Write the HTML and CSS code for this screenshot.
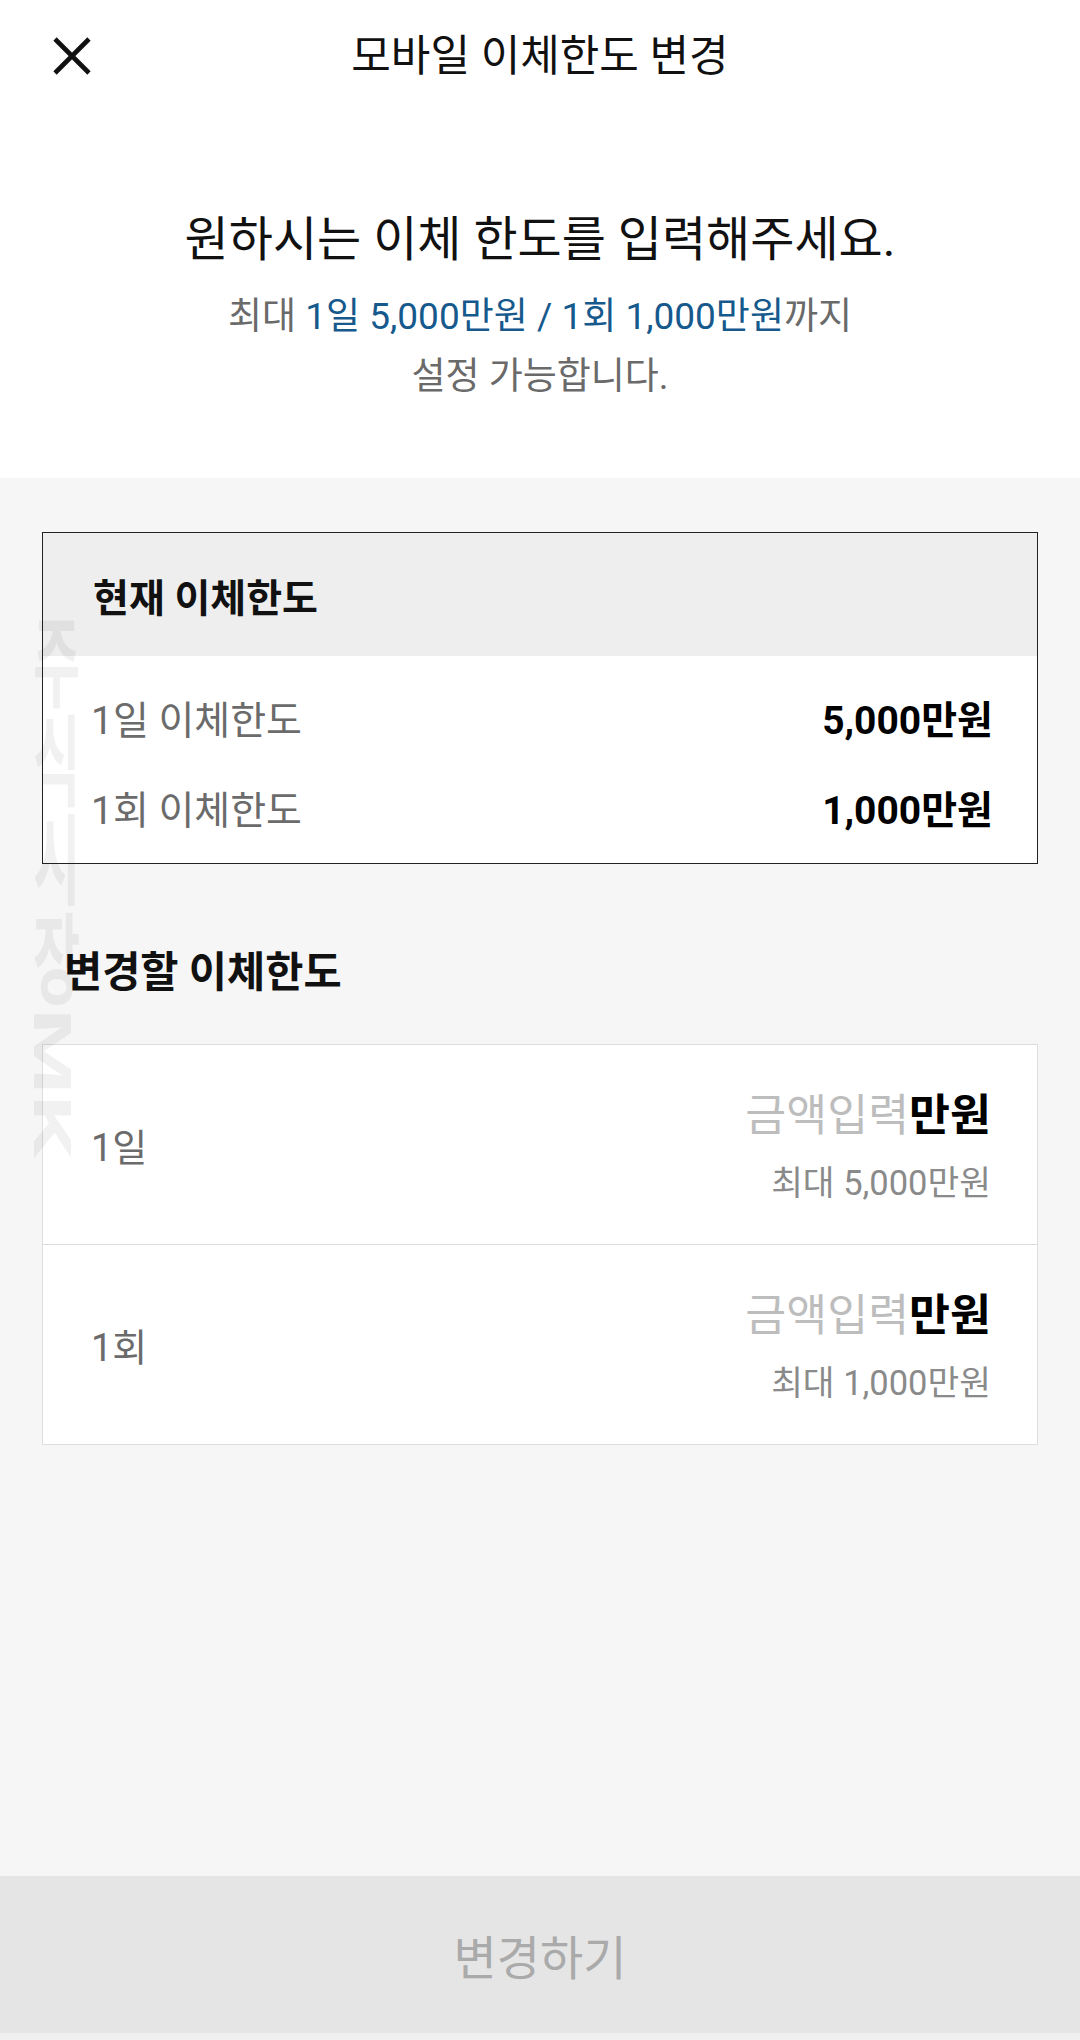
FILE: index.html
```html
<!DOCTYPE html>
<html lang="ko">
<head>
    <meta charset="UTF-8">
    <meta name="viewport" content="width=device-width, initial-scale=1.0">
    <title>모바일 이체한도 변경</title>
    <link rel="stylesheet" href="styles.css">
</head>
<body>
    <div class="screen">
        <header class="top-bar">
            <button class="close-btn" aria-label="닫기">
                <svg width="40" height="38" viewBox="0 0 40 38">
                    <path d="M3 2 L37 36 M37 2 L3 36" stroke="#111" stroke-width="4.6" fill="none"/>
                </svg>
            </button>
            <h1 class="top-title">모바일 이체한도 변경</h1>
            <span></span>
        </header>

        <section class="intro">
            <p class="intro-title">원하시는 이체 한도를 입력해주세요.</p>
            <p class="intro-desc">최대 <span class="accent">1일 5,000만원 / 1회 1,000만원</span>까지<br>설정 가능합니다.</p>
        </section>

        <main class="content">
            <div class="current-box">
                <div class="current-head">현재 이체한도</div>
                <div class="current-body">
                    <div class="limit-row">
                        <span class="limit-label">1일 이체한도</span>
                        <span class="limit-value">5,000만원</span>
                    </div>
                    <div class="limit-row">
                        <span class="limit-label">1회 이체한도</span>
                        <span class="limit-value">1,000만원</span>
                    </div>
                </div>
            </div>

            <h2 class="section-label">변경할 이체한도</h2>

            <div class="input-box">
                <div class="input-row">
                    <span class="input-label">1일</span>
                    <div class="input-field">
                        <div class="amount"><span class="placeholder">금액입력</span><span class="unit">만원</span></div>
                        <div class="max-note">최대 5,000만원</div>
                    </div>
                </div>
                <div class="input-row">
                    <span class="input-label">1회</span>
                    <div class="input-field">
                        <div class="amount"><span class="placeholder">금액입력</span><span class="unit">만원</span></div>
                        <div class="max-note">최대 1,000만원</div>
                    </div>
                </div>
            </div>
        </main>

        <button class="submit-btn" disabled>변경하기</button>
        <div class="nav-strip"></div>

        <!-- 워터마크 -->
        <div class="watermark">주식시장MK</div>
    </div>
</body>
</html>
```

FILE: styles.css
```css
* {
    margin: 0;
    padding: 0;
    box-sizing: border-box;
}

body {
    font-family: Roboto, "Noto Sans CJK KR", sans-serif;
    background: #f6f6f6;
    color: #111;
}

.screen {
    position: relative;
    width: 1080px;
    height: 2040px;
    display: flex;
    flex-direction: column;
    background: #f6f6f6;
    overflow: hidden;
}

.top-bar {
    height: 112px;
    background: #fff;
    display: grid;
    grid-template-columns: 144px 1fr 144px;
    align-items: center;
}

.close-btn {
    justify-self: center;
    display: flex;
    border: none;
    background: none;
    cursor: pointer;
}

.top-title {
    font-size: 43px;
    font-weight: 400;
    line-height: 60px;
    text-align: center;
    color: #111;
}

.intro {
    background: #fff;
    padding: 98px 0 71px;
    text-align: center;
}

.intro-title {
    font-size: 48px;
    line-height: 60px;
    color: #111;
}

.intro-desc {
    margin-top: 17px;
    font-size: 37px;
    line-height: 60px;
    color: #6a6a6a;
}

.accent {
    color: #16598c;
}

.content {
    flex: 1;
    padding: 54px 42px 0;
}

.current-box {
    border: 1px solid #222;
    background: #fff;
}

.current-head {
    height: 123px;
    display: flex;
    align-items: center;
    padding: 0 50px;
    background: #eee;
    font-size: 39px;
    font-weight: 700;
    color: #111;
}

.current-body {
    padding: 16px 0 11px;
}

.limit-row {
    height: 90px;
    display: flex;
    justify-content: space-between;
    align-items: center;
    padding: 0 44px 0 48px;
    font-size: 39px;
}

.limit-label {
    color: #6b6b6b;
}

.limit-value {
    font-weight: 700;
    color: #000;
}

.section-label {
    margin: 79px 0 41px;
    padding-left: 22px;
    font-size: 41.5px;
    line-height: 60px;
    font-weight: 700;
    color: #111;
}

.input-box {
    border: 1px solid #ddd;
    background: #fff;
}

.input-row {
    height: 199px;
    display: flex;
    justify-content: space-between;
    align-items: center;
    padding: 0 46px 0 48px;
}

.input-row + .input-row {
    height: 200px;
    border-top: 1px solid #ddd;
}

.input-label {
    font-size: 38px;
    color: #6b6b6b;
}

.input-field {
    text-align: right;
}

.amount {
    font-size: 44.5px;
    line-height: 60px;
}

.placeholder {
    color: #bdbdbd;
}

.unit {
    font-weight: 700;
    color: #000;
}

.max-note {
    margin-top: 17px;
    font-size: 34.5px;
    line-height: 40px;
    color: #8a8a8a;
}

.submit-btn {
    height: 157px;
    width: 100%;
    border: none;
    background: #e5e5e5;
    color: #aaa;
    font-family: inherit;
    font-size: 47px;
}

.nav-strip {
    height: 7px;
    background: #f0f0f0;
}

.watermark {
    position: absolute;
    left: 26px;
    top: 612px;
    writing-mode: vertical-rl;
    font-size: 99px;
    font-weight: 700;
    line-height: 1;
    color: rgba(0, 0, 0, 0.055);
    transform: scaleX(0.52);
    transform-origin: left top;
    pointer-events: none;
}
```
